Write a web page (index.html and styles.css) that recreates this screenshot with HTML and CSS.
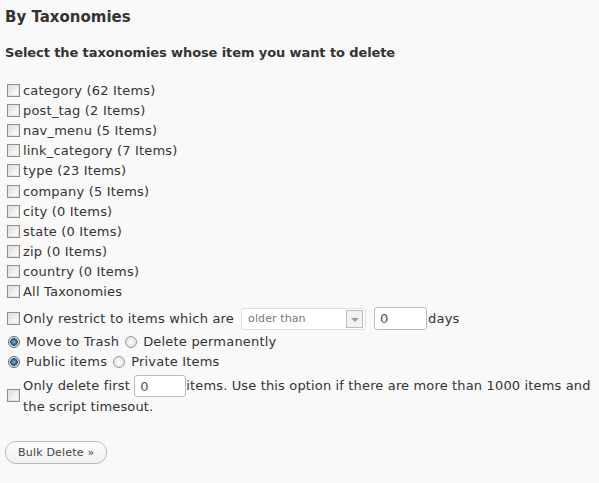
FILE: index.html
```html
<!DOCTYPE html>
<html>
<head>
<meta charset="utf-8">
<link rel="stylesheet" href="styles.css">
</head>
<body>
<div class="wrap">
  <h3 class="title">By Taxonomies</h3>
  <h4 class="subtitle">Select the taxonomies whose item you want to delete</h4>
  <div class="list">
    <label class="row"><input type="checkbox" class="cb"><span>category (62 Items)</span></label>
    <label class="row"><input type="checkbox" class="cb"><span>post_tag (2 Items)</span></label>
    <label class="row"><input type="checkbox" class="cb"><span>nav_menu (5 Items)</span></label>
    <label class="row"><input type="checkbox" class="cb"><span>link_category (7 Items)</span></label>
    <label class="row"><input type="checkbox" class="cb"><span>type (23 Items)</span></label>
    <label class="row"><input type="checkbox" class="cb"><span>company (5 Items)</span></label>
    <label class="row"><input type="checkbox" class="cb"><span>city (0 Items)</span></label>
    <label class="row"><input type="checkbox" class="cb"><span>state (0 Items)</span></label>
    <label class="row"><input type="checkbox" class="cb"><span>zip (0 Items)</span></label>
    <label class="row"><input type="checkbox" class="cb"><span>country (0 Items)</span></label>
    <label class="row"><input type="checkbox" class="cb"><span>All Taxonomies</span></label>
  </div>
  <div class="row restrict">
    <input type="checkbox" class="cb"><span>Only restrict to items which are</span>
    <div class="select"><span class="select-text">older than</span><span class="arrow"></span></div>
    <input type="text" class="num days-num" value="0"><span>days</span>
  </div>
  <div class="row radios radios-first">
    <label class="opt"><input type="radio" name="t" class="rb" checked><span>Move to Trash</span></label>
    <label class="opt"><input type="radio" name="t" class="rb"><span>Delete permanently</span></label>
  </div>
  <div class="row radios">
    <label class="opt"><input type="radio" name="p" class="rb" checked><span>Public items</span></label>
    <label class="opt"><input type="radio" name="p" class="rb"><span>Private Items</span></label>
  </div>
  <div class="limit">
    <div class="limit-cb"><input type="checkbox" class="cb"></div>
    <div class="limit-text">Only delete first <input type="text" class="num first-num" value="0">items. Use this option if there are more than 1000 items and the script timesout.</div>
  </div>
  <div class="actions">
    <button class="btn">Bulk Delete &raquo;</button>
  </div>
</div>
</body>
</html>
```
FILE: styles.css
```css
html, body {
  margin: 0;
  padding: 0;
  background: #f9f9f9;
}
body {
  font-family: "DejaVu Sans", Verdana, sans-serif;
  font-size: 13px;
  letter-spacing: 0.2px;
  color: #333;
}
.wrap {
  padding: 8px 0 0 5px;
}
.title {
  margin: 0;
  font-size: 15px;
  font-weight: bold;
  line-height: 18px;
  letter-spacing: 0;
}
.subtitle {
  margin: 19px 0 0 0;
  font-size: 13px;
  font-weight: bold;
  line-height: 16px;
  letter-spacing: -0.1px;
}
.list {
  margin-top: 19px;
  display: flex;
  flex-direction: column;
}
.row {
  display: flex;
  align-items: center;
  height: 20.2px;
}
.cb {
  -webkit-appearance: none;
  appearance: none;
  width: 13px;
  height: 13px;
  margin: 0 3px 0 2px;
  border: 1px solid #8f8f8f;
  background: linear-gradient(135deg, #d8d8d8 0%, #f4f4f4 60%, #fefefe 100%);
  box-shadow: inset 0 0 0 1px #e4e4e4;
  box-sizing: border-box;
  flex: none;
}
.restrict {
  margin-top: 5.8px;
  height: 22px;
}
.select {
  margin-left: 7px;
  width: 125px;
  height: 22px;
  box-sizing: border-box;
  border: 1px solid #dfdfdf;
  border-radius: 3px;
  background: #fff;
  display: flex;
  align-items: center;
  justify-content: space-between;
  padding: 0 2px 0 6px;
  font-size: 11px;
  letter-spacing: 0.1px;
  color: #777;
}
.arrow {
  width: 17px;
  height: 18px;
  box-sizing: border-box;
  border: 1px solid #bbb;
  background: #f2f2f2;
  position: relative;
}
.arrow::after {
  content: "";
  position: absolute;
  left: 4px;
  top: 7px;
  border-left: 4px solid transparent;
  border-right: 4px solid transparent;
  border-top: 4px solid #999;
}
.num {
  width: 53px;
  height: 23px;
  box-sizing: border-box;
  border: 1px solid #bbb;
  border-radius: 3px;
  background: #fff;
  font-family: "DejaVu Sans", Verdana, sans-serif;
  font-size: 13px;
  color: #555;
  padding: 0 5px;
  margin: 0;
}
.days-num {
  margin-left: 8px;
  margin-right: 1px;
}
.radios {
  gap: 3px;
  height: 20px;
}
.radios-first {
  margin-top: 2px;
}
.opt {
  display: flex;
  align-items: center;
}
.rb {
  -webkit-appearance: none;
  appearance: none;
  width: 12px;
  height: 12px;
  margin: 0 6px 0 3px;
  border-radius: 50%;
  border: 1px solid #999;
  box-sizing: border-box;
  background: radial-gradient(circle at 50% 50%, #fff 0%, #e5e5e5 70%, #ccc 100%);
  flex: none;
}
.rb:checked {
  background: radial-gradient(circle at 50% 50%, #9ad 0, #2a6ca3 2.5px, #1f4d78 3.5px, #ddd 4px, #f0f0f0 100%);
  border-color: #6a6a6a;
}
.limit {
  display: flex;
  align-items: center;
  margin-top: 3px;
}
.limit-cb {
  flex: none;
  display: flex;
  align-items: center;
}
.limit-text {
  line-height: 21px;
  letter-spacing: 0.15px;
  padding-right: 4px;
}
.first-num {
  vertical-align: middle;
  width: 52px;
  height: 22px;
  margin: -4px 0;
}
.actions {
  margin-top: 24.5px;
}
.btn {
  font-family: "DejaVu Sans", Verdana, sans-serif;
  font-size: 11px;
  letter-spacing: 0.2px;
  color: #464646;
  height: 23px;
  padding: 0 12px;
  border: 1px solid #bbb;
  border-radius: 11px;
  background: linear-gradient(to bottom, #fefefe, #f0f0f0);
  cursor: pointer;
}
```
